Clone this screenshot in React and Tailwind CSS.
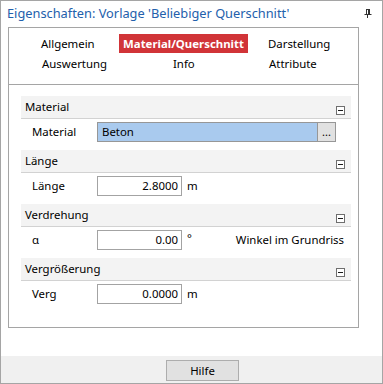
import React from "react";

const font = "font-['Noto_Sans','Segoe_UI',sans-serif]";

function Minus() {
  return (
    <div className="self-end mb-[3px] mr-[6px] w-[9px] h-[9px] border border-[#6e6e6e] bg-white flex items-center justify-center">
      <div className="w-[5px] h-px bg-[#1a1a1a]" />
    </div>
  );
}

function Header({ title }) {
  return (
    <div className="h-[23px] bg-[#f3f3f3] border-b border-[#d2d2d2] flex items-center justify-between">
      <span className="pl-[4px] text-[11.4px] leading-[16px] text-black">{title}</span>
      <Minus />
    </div>
  );
}

function Row({ label, children }) {
  return (
    <div className="h-[31px] flex items-start pt-[3px]">
      <div className="w-[76px] pl-[11px] h-[20px] flex items-center text-[11.4px] leading-[16px] text-black">{label}</div>
      {children}
    </div>
  );
}

function NumField({ value }) {
  return (
    <div className="w-[85px] h-[20px] border border-[#a3a3a3] bg-white flex items-center justify-end pr-[3px] text-[11.4px] leading-[16px] text-black">
      {value}
    </div>
  );
}

export default function App() {
  return (
    <div className={`${font} w-[383px] h-[384px] border border-[#a5a5a5] bg-white flex flex-col`}>
      {/* title */}
      <div className="h-[26px] flex items-start justify-between">
        <span className="pl-[6px] pt-[3px] text-[12.8px] leading-[18px] text-[#2360ac] whitespace-nowrap">
          Eigenschaften: Vorlage 'Beliebiger Querschnitt'
        </span>
        <svg className="mt-[8px] mr-[10px]" width="8" height="9" viewBox="0 0 8 9" fill="none">
          <rect x="2.5" y="0.5" width="3" height="5" stroke="#333" strokeWidth="1" />
          <rect x="4" y="0" width="1.5" height="6" fill="#333" />
          <line x1="0.5" y1="5.5" x2="7.5" y2="5.5" stroke="#333" strokeWidth="1" />
          <line x1="3.5" y1="6" x2="3.5" y2="9" stroke="#333" strokeWidth="1" />
        </svg>
      </div>

      {/* panel area */}
      <div className="h-[301px] pl-[7px]">
        <div className="w-[351px] h-[301px] border border-[#a5a5a5] bg-white">
          {/* tabs */}
          <div className="h-[57px] border-b border-[#a5a5a5] pt-[6px] text-[11.4px] text-black">
            <div className="flex items-center h-[19px] pl-[32px] leading-[19px]">
              <div className="w-[78px]">Allgemein</div>
              <div className="w-[149px]">
                <div className="w-[129px] h-[19px] bg-[#d13438] text-white font-bold text-center leading-[19px]">
                  Material/Querschnitt
                </div>
              </div>
              <div>Darstellung</div>
            </div>
            <div className="flex items-center h-[20px] pl-[33px] leading-[20px] mt-px">
              <div className="w-[77px]">Auswertung</div>
              <div className="w-[149px] pl-[54px]">Info</div>
              <div className="pl-px">Attribute</div>
            </div>
          </div>

          {/* property grid */}
          <div className="ml-[12px] mt-[11px] w-[330px]">
            <Header title="Material" />
            <Row label="Material">
              <div className="w-[239px] h-[20px] border border-[#979797] flex">
                <div className="flex-1 bg-[#a9caee] pl-[4px] flex items-center text-[11.4px] leading-[16px] text-black">Beton</div>
                <div className="w-[18px] border-l border-[#979797] bg-[#e1e1e1] flex items-center justify-center text-[11px] leading-[12px] text-black">...</div>
              </div>
            </Row>
            <Header title="Länge" />
            <Row label="Länge">
              <NumField value="2.8000" />
              <span className="ml-[5px] h-[20px] flex items-center text-[11.4px] leading-[16px]">m</span>
            </Row>
            <Header title="Verdrehung" />
            <Row label="α">
              <NumField value="0.00" />
              <span className="ml-[5px] h-[20px] flex items-start pt-[1px] text-[11.4px] leading-[14px]">°</span>
              <span className="ml-auto mr-[7px] h-[20px] flex items-center text-[11.4px] leading-[16px]">Winkel im Grundriss</span>
            </Row>
            <Header title="Vergrößerung" />
            <Row label="Verg">
              <NumField value="0.0000" />
              <span className="ml-[5px] h-[20px] flex items-center text-[11.4px] leading-[16px]">m</span>
            </Row>
          </div>
        </div>
      </div>

      <div className="h-[28px]" />

      {/* footer */}
      <div className="h-[27px] bg-[#f0f0f0] pt-[4px]">
        <div className="ml-[165px] w-[73px] h-[21px] border border-[#adadad] bg-[#e1e1e1] flex items-center justify-center text-[11.4px] leading-[16px] text-black">
          Hilfe
        </div>
      </div>
    </div>
  );
}
